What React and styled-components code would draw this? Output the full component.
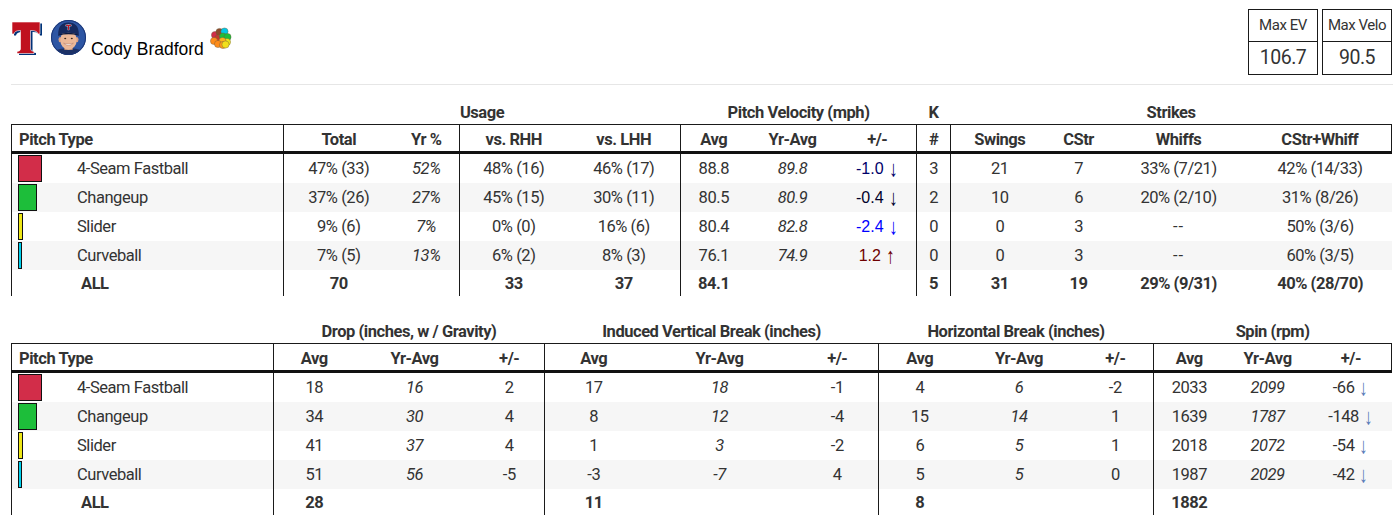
import React from 'react';
import styled, { createGlobalStyle } from 'styled-components';

const GlobalStyle = createGlobalStyle`
  body {
    margin: 0;
    background: #fff;
    font-family: Roboto, "Noto Sans", sans-serif;
    color: #333;
  }
`;

const pitches = [
  { name: '4-Seam Fastball', color: '#d22d49', pct: 47 },
  { name: 'Changeup', color: '#1dbe3a', pct: 37 },
  { name: 'Slider', color: '#eee716', pct: 9 },
  { name: 'Curveball', color: '#00d1ed', pct: 7 },
];

// usage / velocity / strikes table
const usageCols = [
  { w: 272 },
  { w: 110, div: true }, { w: 66, it: true }, { w: 108, div: true }, { w: 113 },
  { w: 66, div: true }, { w: 92, it: true }, { w: 78, kind: 'velo' },
  { w: 34, div: true },
  { w: 98, div: true }, { w: 60 }, { w: 140 }, { w: 143 },
];
const usageGroups = [
  ['', 1], ['Usage', 4], ['Pitch Velocity (mph)', 3], ['K', 1], ['Strikes', 4],
];
const usageHeads = ['Pitch Type', 'Total', 'Yr %', 'vs. RHH', 'vs. LHH', 'Avg', 'Yr-Avg', '+/-', '#', 'Swings', 'CStr', 'Whiffs', 'CStr+Whiff'];
const usageRows = [
  ['47% (33)', '52%', '48% (16)', '46% (17)', '88.8', '89.8', -1.0, '3', '21', '7', '33% (7/21)', '42% (14/33)'],
  ['37% (26)', '27%', '45% (15)', '30% (11)', '80.5', '80.9', -0.4, '2', '10', '6', '20% (2/10)', '31% (8/26)'],
  ['9% (6)', '7%', '0% (0)', '16% (6)', '80.4', '82.8', -2.4, '0', '0', '3', '--', '50% (3/6)'],
  ['7% (5)', '13%', '6% (2)', '8% (3)', '76.1', '74.9', 1.2, '0', '0', '3', '--', '60% (3/5)'],
];
const usageAll = ['70', '', '33', '37', '84.1', '', '', '5', '31', '19', '29% (9/31)', '40% (28/70)'];

// movement / spin table
const moveCols = [
  { w: 262 },
  { w: 81, div: true }, { w: 120, it: true }, { w: 70 },
  { w: 98, div: true }, { w: 154, it: true }, { w: 82 },
  { w: 82, div: true }, { w: 117, it: true }, { w: 76 },
  { w: 71, div: true }, { w: 86, it: true }, { w: 81, kind: 'spin' },
];
const moveGroups = [
  ['', 1], ['Drop (inches, w / Gravity)', 3], ['Induced Vertical Break (inches)', 3],
  ['Horizontal Break (inches)', 3], ['Spin (rpm)', 3],
];
const moveHeads = ['Pitch Type', 'Avg', 'Yr-Avg', '+/-', 'Avg', 'Yr-Avg', '+/-', 'Avg', 'Yr-Avg', '+/-', 'Avg', 'Yr-Avg', '+/-'];
const moveRows = [
  ['18', '16', '2', '17', '18', '-1', '4', '6', '-2', '2033', '2099', '-66'],
  ['34', '30', '4', '8', '12', '-4', '15', '14', '1', '1639', '1787', '-148'],
  ['41', '37', '4', '1', '3', '-2', '6', '5', '1', '2018', '2072', '-54'],
  ['51', '56', '-5', '-3', '-7', '4', '5', '5', '0', '1987', '2029', '-42'],
];
const moveAll = ['28', '', '', '11', '', '', '8', '', '', '1882', '', ''];

const deltaColor = (d) => {
  const m = Math.min(1, Math.abs(d) / 2.4);
  return d < 0 ? `rgb(0,0,${Math.round(255 * m)})` : `rgb(${Math.round(220 * m)},0,0)`;
};

const Page = styled.div`
  padding: 9px 0 0 11px;
  width: 1382px;
`;

const TopBar = styled.div`
  display: flex;
  justify-content: space-between;
  align-items: flex-start;
  height: 75px;
  padding-right: 1px;
`;

const Player = styled.div`
  display: flex;
  align-items: flex-end;
  margin-top: 11px;
  margin-left: 1px;
`;

const Headshot = styled.svg`
  margin-left: 8px;
`;

const Name = styled.span`
  font-family: "Liberation Sans", Arial, sans-serif;
  font-size: 17.5px;
  line-height: 1;
  color: #000;
  margin-left: 5px;
  margin-bottom: -3px;
`;

const Badge = styled.svg`
  align-self: flex-start;
  margin-top: 7px;
  margin-left: 5px;
`;

const StatBoxes = styled.div`
  display: flex;
  gap: 4px;
`;

const StatBox = styled.div`
  width: 70px;
  box-sizing: border-box;
  border: 1px solid #1a1a1a;
  text-align: center;
`;

const StatLabel = styled.div`
  height: 31px;
  line-height: 31px;
  font-size: 15px;
  letter-spacing: -0.45px;
  border-bottom: 1px solid #1a1a1a;
`;

const StatValue = styled.div`
  height: 32px;
  line-height: 32px;
  font-size: 19.5px;
  letter-spacing: -0.5px;
`;

const Rule = styled.div`
  border-top: 1px solid #e6e6e6;
`;

const Table = styled.table`
  border-collapse: collapse;
  table-layout: fixed;
  width: 1380px;
  margin-top: ${(p) => p.$top}px;
  font-size: 16.5px;
  letter-spacing: -0.45px;
`;

const Col = styled.col`
  width: ${(p) => p.$w}px;
`;

const GroupCell = styled.th`
  height: 24px;
  padding: 2px 0 0;
  font-weight: 700;
  text-align: center;
  vertical-align: middle;
`;

const HeadCell = styled.th`
  height: 24px;
  padding: 2px 0 0 ${(p) => (p.$left ? 7 : 0)}px;
  font-weight: 700;
  text-align: ${(p) => (p.$left ? 'left' : 'center')};
  vertical-align: middle;
  border-top: 1px solid #1a1a1a;
  border-bottom: 3px solid #111;
  border-left: ${(p) => (p.$div ? '1px solid #1a1a1a' : 'none')};
  border-right: ${(p) => (p.$last ? '1px solid #1a1a1a' : 'none')};
`;

const Row = styled.tr`
  background: ${(p) => (p.$alt ? '#f6f6f6' : '#fff')};
`;

const Cell = styled.td`
  height: ${(p) => (p.$total ? 26 : 29)}px;
  padding: 0;
  text-align: center;
  vertical-align: middle;
  font-style: ${(p) => (p.$it ? 'italic' : 'normal')};
  font-weight: ${(p) => (p.$total ? 700 : 400)};
  border-left: ${(p) => (p.$div ? '1px solid #1a1a1a' : 'none')};
  white-space: nowrap;
`;

const Dashes = styled.span`
  letter-spacing: 1px;
`;

const PitchCell = styled.td`
  height: ${(p) => (p.$total ? 26 : 29)}px;
  padding: 0 0 0 ${(p) => (p.$total ? 69 : 6)}px;
  border-left: 1px solid #1a1a1a;
  font-weight: ${(p) => (p.$total ? 700 : 400)};
  vertical-align: middle;
`;

const PitchWrap = styled.div`
  display: flex;
  align-items: center;
`;

const SwatchSlot = styled.div`
  width: 59px;
  flex: none;
  display: flex;
  align-items: center;
`;

const Swatch = styled.div.attrs((p) => ({ style: { width: `${p.$pct * 0.52}px` } }))`
  height: 27px;
  box-sizing: border-box;
  border: 1px solid #111;
  background: ${(p) => p.$color};
`;

const VeloDelta = styled.span`
  font-family: "Liberation Sans", Arial, sans-serif;
  font-size: 16px;
  letter-spacing: 0;
  color: ${(p) => p.$color};
`;

const Arrow = styled.span`
  display: inline-block;
  font-family: "Liberation Sans", Arial, sans-serif;
  font-size: 22px;
  line-height: 0;
  letter-spacing: 0;
  margin-left: 4px;
  vertical-align: -2px;
  transform: scaleX(0.8);
  color: ${(p) => p.$color || 'inherit'};
`;

const RangersLogo = () => (
  <svg width="31" height="33" viewBox="0 0 31 33">
    <path
      d="M0 0 H28 V12 H26 Q25.5 8.5 19 8.5 H18.5 V27 Q18.5 29 22 29.5 V31.5 H5 V29.5 Q8.5 29 8.5 27 V8.5 H8 Q2.5 8.5 2 12 H0 Z"
      transform="translate(2 1.5)"
      fill="#003278"
    />
    <path
      d="M0 0 H28 V12 H26 Q25.5 8.5 19 8.5 H18.5 V27 Q18.5 29 22 29.5 V31.5 H5 V29.5 Q8.5 29 8.5 27 V8.5 H8 Q2.5 8.5 2 12 H0 Z"
      fill="#c0111f"
      stroke="#fff"
      strokeWidth="0.6"
    />
  </svg>
);

const PlayerHeadshot = () => (
  <Headshot width="35" height="35" viewBox="0 0 34 34">
    <defs>
      <clipPath id="hs-clip">
        <circle cx="17" cy="17" r="17" />
      </clipPath>
    </defs>
    <g clipPath="url(#hs-clip)">
      <rect width="34" height="34" fill="#2d55a3" />
      <path d="M1 34 Q3 27 17 27.5 Q31 27 33 34 Z" fill="#1c3166" />
      <rect x="13" y="24" width="8" height="5" fill="#d39b7b" />
      <ellipse cx="8.9" cy="19" rx="1.6" ry="2.6" fill="#d99f82" />
      <ellipse cx="25.1" cy="19" rx="1.6" ry="2.6" fill="#d99f82" />
      <ellipse cx="17" cy="19.5" rx="8" ry="9.3" fill="#ebb898" />
      <path d="M7 14 Q7 2.5 17 2.5 Q27 2.5 27 14 Q17 11 7 14 Z" fill="#15295e" />
      <path d="M7 14 Q17 10.8 27 14 L27 15.2 Q17 12.4 7 15.2 Z" fill="#0c1a40" />
      <rect x="14.2" y="4.5" width="5.6" height="1.6" fill="#fff" />
      <rect x="16.2" y="4.5" width="1.6" height="5.4" fill="#fff" />
      <rect x="14.6" y="4.8" width="4.8" height="1" fill="#c0111f" />
      <rect x="16.5" y="4.8" width="1" height="4.8" fill="#c0111f" />
      <ellipse cx="13.8" cy="18" rx="1" ry="0.7" fill="#3a2a22" />
      <ellipse cx="20.2" cy="18" rx="1" ry="0.7" fill="#3a2a22" />
      <path d="M12.3 22.6 Q17 26.6 21.7 22.6 Q17 24 12.3 22.6 Z" fill="#fff" stroke="#a86a55" strokeWidth="0.4" />
    </g>
    <circle cx="17" cy="17" r="16.5" fill="none" stroke="#1b3676" strokeWidth="1" />
  </Headshot>
);

const dots = [
  [6, 8, '#d22d49'], [10.5, 5, '#8b4a2b'], [15.5, 4.5, '#00c8e6'], [9, 11.5, '#c23b2f'],
  [14, 9.5, '#1dbe3a'], [18.5, 10, '#1dbe3a'], [5, 14, '#ff8c1a'], [18, 15, '#eee716'],
  [13.5, 14, '#ffb31a'], [9, 17, '#ff8c1a'], [14, 18, '#ff9a1a'], [16.5, 17.5, '#f2e01a'],
];

const PitchBadge = () => (
  <Badge width="23" height="22" viewBox="0 0 23 22">
    {dots.map(([cx, cy, c], i) => (
      <circle key={i} cx={cx} cy={cy} r="3.6" fill={c} stroke="#6b5a3a" strokeWidth="0.4" />
    ))}
  </Badge>
);

const StatCard = ({ label, value }) => (
  <StatBox>
    <StatLabel>{label}</StatLabel>
    <StatValue>{value}</StatValue>
  </StatBox>
);

const renderValue = (col, v) => {
  if (col.kind === 'velo' && typeof v === 'number') {
    return (
      <VeloDelta $color={deltaColor(v)}>
        {v.toFixed(1)}
        <Arrow>{v < 0 ? '↓' : '↑'}</Arrow>
      </VeloDelta>
    );
  }
  if (col.kind === 'spin' && v) {
    return (
      <>
        {v}
        <Arrow $color="#5a7cb8">{v.startsWith('-') ? '↓' : '↑'}</Arrow>
      </>
    );
  }
  if (v === '--') return <Dashes>--</Dashes>;
  return v;
};

const StatTable = ({ cols, groups, heads, rows, totals, top }) => (
  <Table $top={top}>
    <colgroup>
      {cols.map((c, i) => (
        <Col key={i} $w={c.w} />
      ))}
    </colgroup>
    <thead>
      <tr>
        {groups.map(([label, span], i) => (
          <GroupCell key={i} colSpan={span}>
            {label}
          </GroupCell>
        ))}
      </tr>
      <tr>
        {heads.map((h, i) => (
          <HeadCell
            key={i}
            $left={i === 0}
            $div={i === 0 || cols[i].div}
            $last={i === heads.length - 1}
          >
            {h}
          </HeadCell>
        ))}
      </tr>
    </thead>
    <tbody>
      {rows.map((r, ri) => (
        <Row key={ri} $alt={ri % 2 === 1}>
          <PitchCell>
            <PitchWrap>
              <SwatchSlot>
                <Swatch $pct={pitches[ri].pct} $color={pitches[ri].color} />
              </SwatchSlot>
              {pitches[ri].name}
            </PitchWrap>
          </PitchCell>
          {r.map((v, ci) => {
            const col = cols[ci + 1];
            return (
              <Cell key={ci} $div={col.div} $it={col.it}>
                {renderValue(col, v)}
              </Cell>
            );
          })}
        </Row>
      ))}
      <Row>
        <PitchCell $total>ALL</PitchCell>
        {totals.map((v, ci) => (
          <Cell key={ci} $div={cols[ci + 1].div} $total>
            {v}
          </Cell>
        ))}
      </Row>
    </tbody>
  </Table>
);

export default function App() {
  return (
    <>
      <GlobalStyle />
      <Page>
        <TopBar>
          <Player>
            <RangersLogo />
            <PlayerHeadshot />
            <Name>Cody Bradford</Name>
            <PitchBadge />
          </Player>
          <StatBoxes>
            <StatCard label="Max EV" value="106.7" />
            <StatCard label="Max Velo" value="90.5" />
          </StatBoxes>
        </TopBar>
        <Rule />
        <StatTable
          cols={usageCols}
          groups={usageGroups}
          heads={usageHeads}
          rows={usageRows}
          totals={usageAll}
          top={13}
        />
        <StatTable
          cols={moveCols}
          groups={moveGroups}
          heads={moveHeads}
          rows={moveRows}
          totals={moveAll}
          top={21}
        />
      </Page>
    </>
  );
}
